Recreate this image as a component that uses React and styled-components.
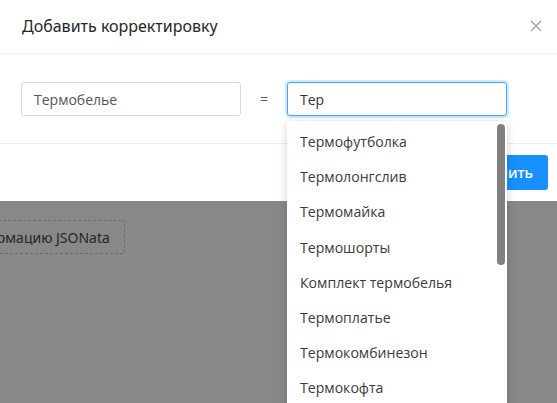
import React from 'react'
import styled, { createGlobalStyle } from 'styled-components'

const Global = createGlobalStyle`
  html, body {
    margin: 0;
    padding: 0;
    background: #888888;
  }
  * { box-sizing: border-box; }
`

const options = [
  'Термофутболка',
  'Термолонгслив',
  'Термомайка',
  'Термошорты',
  'Комплект термобелья',
  'Термоплатье',
  'Термокомбинезон',
  'Термокофта',
  'Термоноски',
]

const App = () => {
  return (
    <Page>
      <Global />
      <Modal>
        <Header>
          <Title>Добавить корректировку</Title>
          <Close aria-label="close">
            <svg width="12" height="12" viewBox="0 0 12 12">
              <path d="M1 1 L11 11 M11 1 L1 11" stroke="#999" strokeWidth="1.1" fill="none" />
            </svg>
          </Close>
        </Header>
        <Body>
          <Field>
            <Input defaultValue="Термобелье" />
          </Field>
          <Equals>=</Equals>
          <Field>
            <Input defaultValue="Тер" focused />
            <Dropdown>
              {options.map((o, i) => (
                <Option key={i}>{o}</Option>
              ))}
              <Thumb />
            </Dropdown>
          </Field>
        </Body>
        <Footer>
          <PrimaryButton>Сохранить</PrimaryButton>
        </Footer>
      </Modal>
      <Backdrop>
        <DashedButton>Добавить трансформацию JSONata</DashedButton>
      </Backdrop>
    </Page>
  )
}

const Page = styled.div`
  position: relative;
  width: 557px;
  height: 403px;
  overflow: hidden;
  background: #888888;
  font-family: "Open Sans", "Noto Sans", sans-serif;
`

const Modal = styled.div`
  background: #fff;
  height: 201px;
  display: flex;
  flex-direction: column;
  position: relative;
  z-index: 2;
`

const Header = styled.div`
  height: 54px;
  padding: 0 15px 0 22px;
  display: flex;
  align-items: center;
  justify-content: space-between;
  border-bottom: 1px solid #ececec;
`

const Title = styled.div`
  font-family: "Noto Sans", "Open Sans", sans-serif;
  font-size: 16px;
  color: #262626;
  margin-top: -1px;
`

const Close = styled.div`
  width: 12px;
  height: 12px;
  display: flex;
  margin-top: -2px;
`

const Body = styled.div`
  height: 90px;
  padding: 28px 50px 0 21px;
  display: flex;
  align-items: flex-start;
  border-bottom: 1px solid #ececec;
`

const Field = styled.div`
  position: relative;
  width: 220px;
`

const Input = styled.div.attrs(p => ({ children: p.defaultValue }))`
  height: 34px;
  border: 1px solid ${p => (p.focused ? '#40a9ff' : '#d9d9d9')};
  box-shadow: ${p => (p.focused ? '0 0 0 2px rgba(24,144,255,0.2)' : 'none')};
  border-radius: 3px;
  padding: 0 12px;
  display: flex;
  align-items: center;
  font-size: 14px;
  color: ${p => (p.focused ? '#333' : '#555')};
`

const Equals = styled.div`
  width: 46px;
  text-align: center;
  line-height: 34px;
  font-size: 14px;
  color: #555;
`

const Dropdown = styled.div`
  position: absolute;
  top: 39px;
  left: 0;
  width: 220px;
  padding: 3px 0;
  background: #fff;
  border-radius: 3px;
  box-shadow: 0 2px 10px rgba(0, 0, 0, 0.18);
  z-index: 5;
`

const Option = styled.div`
  height: 35.2px;
  padding: 0 13px;
  display: flex;
  align-items: center;
  font-size: 14.1px;
  color: #3a3a3a;
  white-space: nowrap;
`

const Thumb = styled.div`
  position: absolute;
  top: 3px;
  right: 2px;
  width: 8px;
  height: 141px;
  border-radius: 4px;
  background: #808080;
`

const Footer = styled.div`
  flex: 1;
  display: flex;
  justify-content: flex-end;
  align-items: flex-start;
  padding: 11px 9px 0 0;
`

const PrimaryButton = styled.div`
  height: 35px;
  padding: 0 15px;
  background: #1890ff;
  color: #fff;
  border-radius: 3px;
  display: flex;
  align-items: center;
  font-size: 14px;
  font-weight: 600;
`

const Backdrop = styled.div`
  padding: 19px 0 0;
`

const DashedButton = styled.div`
  display: inline-flex;
  align-items: center;
  height: 34px;
  margin-left: -144px;
  padding: 0 14px;
  border: 1px dashed #6b6b6b;
  border-radius: 2px;
  font-family: "Noto Sans", "Open Sans", sans-serif;
  font-size: 14px;
  color: #262626;
  white-space: nowrap;
`

export default App
